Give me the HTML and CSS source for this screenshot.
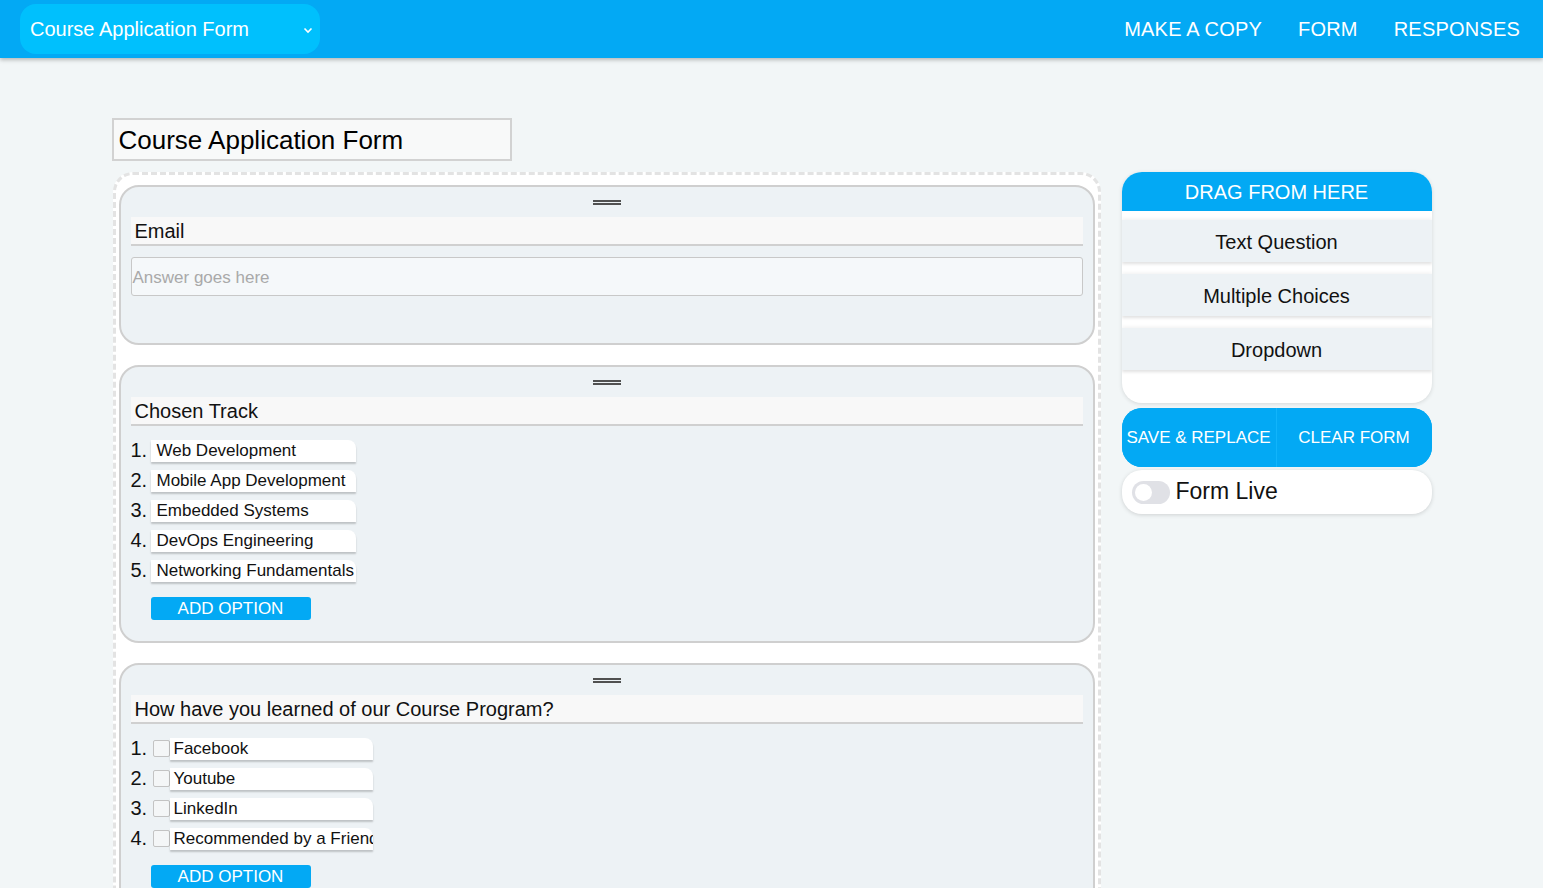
FILE: index.html
```html
<!DOCTYPE html>
<html>
<head>
<meta charset="utf-8">
<title>Course Application Form</title>
<link rel="stylesheet" href="styles.css">
</head>
<body>
<header class="topbar">
  <div class="form-select">
    <span>Course Application Form</span>
    <svg class="chev" width="10" height="7" viewBox="0 0 10 7"><polyline points="1.5,1.5 5,5 8.5,1.5" fill="none" stroke="#fff" stroke-width="1.6"/></svg>
  </div>
  <nav class="nav">
    <a>MAKE A COPY</a>
    <a>FORM</a>
    <a>RESPONSES</a>
  </nav>
</header>

<main class="page">
  <div class="title-box">Course Application Form</div>
  <div class="workspace">
    <section class="dropzone">
      <div class="card">
        <div class="handle"><i></i><i></i></div>
        <div class="question">Email</div>
        <div class="answer">Answer goes here</div>
        <div class="card-spacer"></div>
      </div>

      <div class="card">
        <div class="handle"><i></i><i></i></div>
        <div class="question">Chosen Track</div>
        <ol class="options">
          <li><span class="num">1.</span><span class="opt">Web Development</span></li>
          <li><span class="num">2.</span><span class="opt">Mobile App Development</span></li>
          <li><span class="num">3.</span><span class="opt">Embedded Systems</span></li>
          <li><span class="num">4.</span><span class="opt">DevOps Engineering</span></li>
          <li><span class="num">5.</span><span class="opt">Networking Fundamentals</span></li>
        </ol>
        <button class="add-btn">ADD OPTION</button>
      </div>

      <div class="card">
        <div class="handle"><i></i><i></i></div>
        <div class="question">How have you learned of our Course Program?</div>
        <ol class="options">
          <li><span class="num">1.</span><span class="chk"></span><span class="opt opt-chk">Facebook</span></li>
          <li><span class="num">2.</span><span class="chk"></span><span class="opt opt-chk">Youtube</span></li>
          <li><span class="num">3.</span><span class="chk"></span><span class="opt opt-chk">LinkedIn</span></li>
          <li><span class="num">4.</span><span class="chk"></span><span class="opt opt-chk">Recommended by a Friend</span></li>
        </ol>
        <button class="add-btn">ADD OPTION</button>
      </div>
    </section>

    <aside class="side">
      <div class="palette">
        <div class="palette-head">DRAG FROM HERE</div>
        <div class="palette-items">
          <div class="palette-item">Text Question</div>
          <div class="palette-item">Multiple Choices</div>
          <div class="palette-item">Dropdown</div>
        </div>
      </div>
      <div class="actions">
        <button class="act">SAVE &amp; REPLACE</button>
        <button class="act">CLEAR FORM</button>
      </div>
      <div class="live">
        <span class="toggle"><span class="knob"></span></span>
        <span class="live-label">Form Live</span>
      </div>
    </aside>
  </div>
</main>
</body>
</html>
```

FILE: styles.css
```css
* { box-sizing: border-box; }
html, body { margin: 0; padding: 0; }
body {
  background: #f2f6f7;
  font-family: "Liberation Sans", Arial, sans-serif;
  color: #111;
  height: 888px;
  overflow: hidden;
}

.topbar {
  height: 58px;
  background: #03a9f4;
  display: flex;
  align-items: center;
  justify-content: space-between;
  padding: 0 23px 0 20px;
  box-shadow: 0 2px 4px rgba(0,0,0,0.25);
  position: relative;
  z-index: 2;
}
.form-select {
  width: 300px;
  height: 50px;
  background: #00c0fd;
  border-radius: 16px;
  display: flex;
  align-items: center;
  justify-content: space-between;
  padding: 0 7px 0 10px;
  color: #fff;
  font-size: 20px;
}
.chev { margin-top: 2px; }
.nav { display: flex; gap: 36px; }
.nav a {
  color: #fff;
  font-size: 20px;
  text-decoration: none;
  letter-spacing: 0.2px;
}

.page {
  width: 1320px;
  margin: 0 auto;
  padding-top: 60px;
}
.title-box {
  width: 400px;
  height: 43px;
  border: 2px solid #d2d2d2;
  background: #f8f9f9;
  font-size: 26px;
  padding: 5px 0 0 5px;
  color: #000;
}
.workspace {
  display: flex;
  align-items: flex-start;
  gap: 21px;
  margin-top: 11px;
  padding-left: 1px;
}
.dropzone {
  width: 988px;
  border: 3px dashed #e3e3e3;
  border-radius: 20px;
  background: #fff;
  padding: 10px 3px 0 3px;
  display: flex;
  flex-direction: column;
  gap: 20px;
}
.card {
  border: 2px solid #cfcfcf;
  border-radius: 20px;
  background: #edf2f5;
  padding: 0 10px 21px 10px;
}
.handle {
  height: 30px;
  display: flex;
  flex-direction: column;
  align-items: center;
  padding-top: 13px;
  gap: 1px;
}
.handle i {
  display: block;
  width: 28px;
  height: 2px;
  background: #505050;
}
.question {
  height: 29px;
  background: #f8f8f8;
  border-bottom: 2px solid #d0d0d0;
  font-size: 20px;
  padding: 3px 0 0 4px;
  color: #111;
}
.answer {
  margin-top: 11px;
  height: 39px;
  border: 1px solid #c8c8c8;
  border-radius: 3px;
  background: #f5f8fa;
  font-size: 17px;
  color: #a9a9a9;
  padding: 10px 0 0 1px;
}
.card-spacer { height: 26px; }

.options {
  list-style: none;
  margin: 14px 0 0 0;
  padding: 0;
}
.options li {
  display: flex;
  align-items: flex-start;
  height: 30px;
}
.num {
  width: 20px;
  font-size: 20px;
  color: #111;
  line-height: 20px;
}
.opt {
  width: 205px;
  height: 22px;
  background: #fff;
  border-radius: 0 8px 0 0;
  box-shadow: 0 2px 2px rgba(0,0,0,0.2);
  font-size: 17px;
  line-height: 22px;
  padding-left: 6px;
  white-space: nowrap;
  overflow: hidden;
}
.chk {
  width: 17px;
  height: 17px;
  border: 1px solid #c3c3c3;
  border-radius: 2px;
  background: #f4f6f7;
  margin: 2px 0 0 2px;
}
.opt.opt-chk {
  width: 203px;
  padding-left: 4px;
}
.add-btn {
  display: block;
  margin: 7px 0 0 20px;
  width: 160px;
  height: 23px;
  border: none;
  border-radius: 3px;
  background: #03a9f4;
  color: #fff;
  font-family: "Liberation Sans", Arial, sans-serif;
  font-size: 17px;
  padding: 0;
  line-height: 23px;
}

.side {
  width: 310px;
  display: flex;
  flex-direction: column;
}
.palette {
  background: #fff;
  border-radius: 20px;
  overflow: hidden;
  box-shadow: 0 1px 4px rgba(0,0,0,0.12);
}
.palette-head {
  height: 39px;
  background: #03a9f4;
  color: #fff;
  font-size: 20px;
  text-align: center;
  padding-top: 9px;
}
.palette-items {
  padding: 9px 0 33px 0;
  display: flex;
  flex-direction: column;
  gap: 12px;
}
.palette-item {
  height: 42px;
  background: #edf2f5;
  box-shadow: 0 2px 3px rgba(0,0,0,0.12), 0 -2px 3px rgba(0,0,0,0.04);
  font-size: 20px;
  text-align: center;
  padding-top: 11px;
  color: #111;
}
.actions {
  margin-top: 5px;
  height: 59px;
  display: flex;
  background: #03a9f4;
  border-radius: 20px;
  overflow: hidden;
}
.act {
  flex: 1;
  border: none;
  background: #03a9f4;
  color: #fff;
  font-family: "Liberation Sans", Arial, sans-serif;
  font-size: 17px;
  padding: 1px 0 0 0;
}
.act:first-child {
  flex: 0 0 155px;
  border-right: 1px solid #11b4fb;
}
.live {
  margin-top: 3px;
  height: 44px;
  background: #fff;
  border-radius: 20px;
  box-shadow: 0 1px 4px rgba(0,0,0,0.15);
  display: flex;
  align-items: center;
  padding-left: 10px;
  gap: 6px;
}
.toggle {
  width: 38px;
  height: 23px;
  border-radius: 12px;
  background: #e0e1e6;
  position: relative;
}
.knob {
  position: absolute;
  left: 3px;
  top: 3px;
  width: 17px;
  height: 17px;
  border-radius: 50%;
  background: #fff;
}
.live-label {
  font-size: 23px;
  color: #111;
  margin-top: -2px;
}
```
